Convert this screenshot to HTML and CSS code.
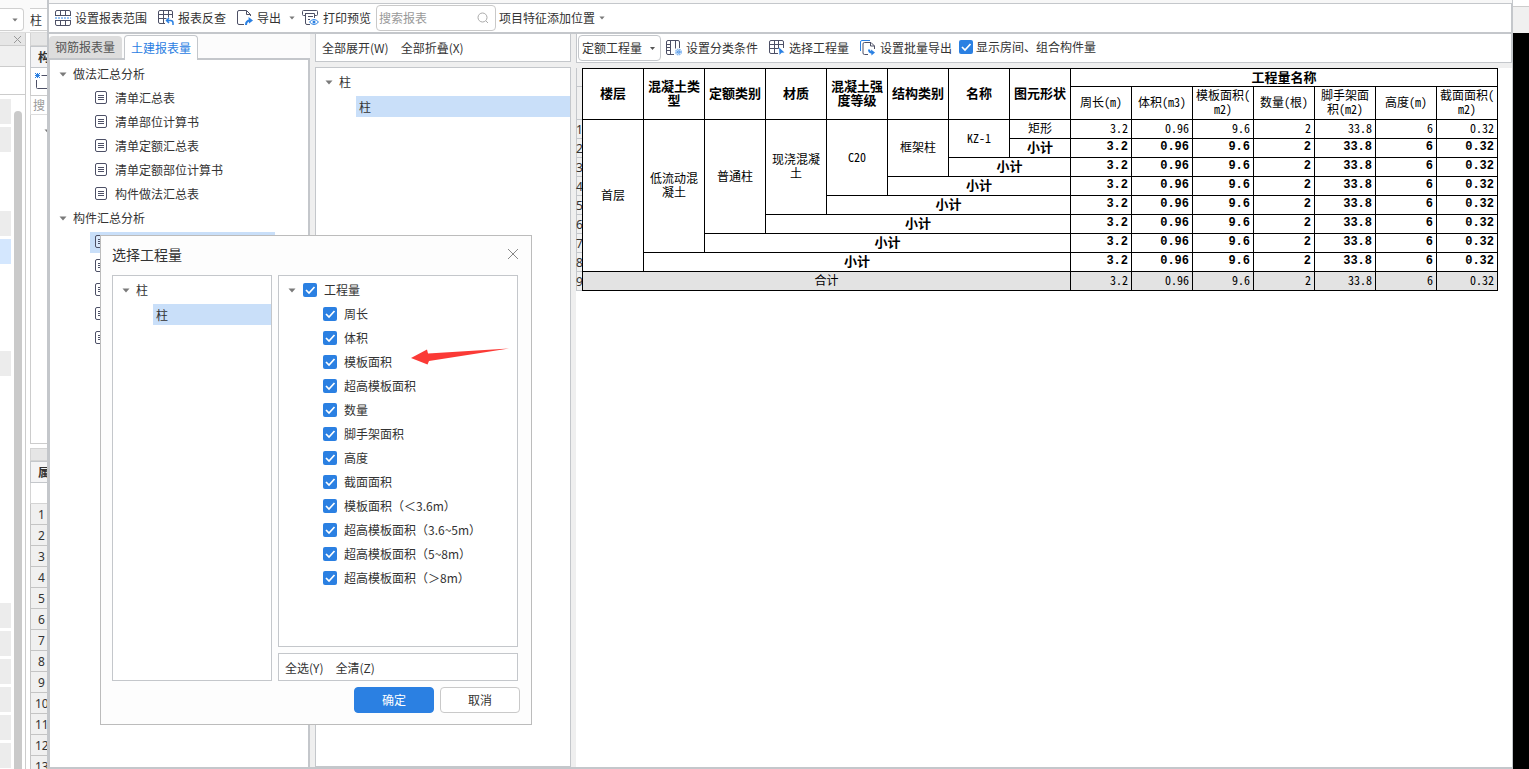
FILE: index.html
```html
<!DOCTYPE html>
<html lang="zh-CN">
<head>
<meta charset="utf-8">
<title>报表</title>
<link rel="stylesheet" href="styles.css">
</head>
<body>
<svg class="defs" width="0" height="0" aria-hidden="true">
  <defs>
    <symbol id="doc" viewBox="0 0 12 13"><rect x=".5" y=".5" width="11" height="12" rx="1.5" fill="#fff" fill-opacity=".3" stroke="#4d5066"/><path d="M3 4.5h6M3 6.5h6M3 8.5h6" stroke="#4d5066"/></symbol>
    <symbol id="caret" viewBox="0 0 8 5"><path d="M.5 .5h7L4 4.5z" fill="#7a7a7a"/></symbol>
  </defs>
</svg>
<div class="desktop">
  <aside class="back-nav">
    <div class="back-top"><span class="back-combo"><svg width="6" height="4"><use href="#caret"/></svg></span></div>
    <div class="back-title"><svg width="9" height="9" viewBox="0 0 9 9"><path d="M1 1l7 7M8 1l-7 7" stroke="#999"/></svg></div>
    <div class="back-band"></div>
    <div class="back-gap"></div>
    <div class="back-list">
      <div class="blocks">
        <i class="on"></i><i class="on"></i><i></i><i></i><i class="on"></i><i class="sel"></i><i></i><i></i><i></i><i class="on"></i><i></i><i></i>
        <i></i><i></i><i></i><i></i><i></i><i></i><i class="on"></i><i class="on"></i><i class="on"></i><i class="on"></i><i class="on"></i><i class="on"></i>
      </div>
      <div class="scroll"></div>
    </div>
  </aside>
  <aside class="back-props">
    <div class="back-top"><span class="back-combo second">柱</span></div>
    <div class="strip"></div>
    <div class="back-tab">构</div>
    <div class="back-new"><svg width="18" height="18" viewBox="0 0 18 18"><path d="M6.500 2.500H16M1.500 7v7.500q0 1 1 1H16" fill="none" stroke="#4d5066"/><path d="M0 0l5 5M5 0L0 5M2.500 0v5M0 2.500h5" stroke="#2b80e2"/></svg></div>
    <div class="back-search">搜</div>
    <div class="back-tree"><svg width="8" height="5"><use href="#caret"/></svg></div>
    <div class="strip lower"></div>
    <div class="back-tab">属</div>
    <div class="back-head"></div>
    <ol class="back-rows"><li>1</li><li>2</li><li>3</li><li>4</li><li>5</li><li>6</li><li>7</li><li>8</li><li>9</li><li>10</li><li>11</li><li>12</li><li>13</li></ol>
  </aside>

  <main class="window">
    <div class="toolbar">
      <button class="tool"><svg width="16" height="16" viewBox="0 0 16 16" fill="none" stroke="#4d5066"><path d="M.5 6V2Q.5 .5 2 .5h12q1.500 0 1.500 1.500v4M.5 10v4q0 1.500 1.500 1.500h12q1.500 0 1.500-1.500v-4M5.500 .5V5M10.500 .5V5M5.500 11v4.500M10.500 11v4.500M.5 5.500h15M.5 10.500h15"/><path d="M0 8h16" stroke="#2b80e2" stroke-dasharray="2 1"/></svg>设置报表范围</button>
      <button class="tool"><svg width="16" height="16" viewBox="0 0 16 16" fill="none" stroke="#4d5066"><path d="M7 13.500H2Q.5 13.500 .5 12V2Q.5 .5 2 .5h11q1.500 0 1.500 1.500v6M.5 4.500h14M.5 8.500h8M5.500 .5v13M10.500 .5v7"/><path d="M8.500 10.500h4q2.500 0 2.500 2.500v2M11 8l-2.500 2.500L11 13" stroke="#2b80e2" stroke-width="1.500"/></svg>报表反查</button>
      <button class="tool"><svg width="16" height="16" viewBox="0 0 16 16" fill="none" stroke="#4d5066"><path d="M7 14.500H2Q.5 14.500 .5 13V2Q.5 .5 2 .5h7.500l4 4V6M9.500 .5v4h4"/><path d="M9 15q0-4.500 4-4.500" stroke="#2b80e2" stroke-width="2"/><path d="M11.500 7l4.500 3.500-4 3z" fill="#2b80e2" stroke="none"/></svg>导出<svg class="drop" width="6" height="4"><use href="#caret"/></svg></button>
      <button class="tool"><svg width="17" height="16" viewBox="0 0 17 16" fill="none" stroke="#4d5066"><path d="M3.500 5.500H1.500q-1 0-1-1v-3q0-1 1-1h13q1 0 1 1v3q0 1-1 1h-2M3.500 3v10q0 1.500 1.500 1.500h3M3.500 3.500h9V8M6 6.500h5M6 9.500h2"/><path d="M7.500 12q4.500-5 9 0-4.500 5-9 0z" stroke="#2b80e2" fill="#fff"/><circle cx="12" cy="12" r="1.500" fill="#2b80e2" stroke="none"/></svg>打印预览</button>
      <label class="search"><input type="text" placeholder="搜索报表" aria-label="搜索报表"><svg width="12" height="12" viewBox="0 0 12 12" fill="none" stroke="#aaa"><circle cx="5.500" cy="5.500" r="4.500"/><path d="M9 9l2 2"/></svg></label>
      <button class="tool place">项目特征添加位置<svg class="drop near" width="6" height="4"><use href="#caret"/></svg></button>
    </div>

    <div class="panes">
      <section class="reports">
        <div class="tabs"><button class="tab">钢筋报表量</button><button class="tab active">土建报表量</button></div>
        <div class="tree report-tree">
          <div class="node"><svg width="8" height="5"><use href="#caret"/></svg>做法汇总分析</div>
          <div class="leaf"><svg width="12" height="13"><use href="#doc"/></svg>清单汇总表</div>
          <div class="leaf"><svg width="12" height="13"><use href="#doc"/></svg>清单部位计算书</div>
          <div class="leaf"><svg width="12" height="13"><use href="#doc"/></svg>清单定额汇总表</div>
          <div class="leaf"><svg width="12" height="13"><use href="#doc"/></svg>清单定额部位计算书</div>
          <div class="leaf"><svg width="12" height="13"><use href="#doc"/></svg>构件做法汇总表</div>
          <div class="node"><svg width="8" height="5"><use href="#caret"/></svg>构件汇总分析</div>
          <div class="leaf picked"><svg width="12" height="13"><use href="#doc"/></svg></div>
          <div class="leaf"><svg width="12" height="13"><use href="#doc"/></svg></div>
          <div class="leaf"><svg width="12" height="13"><use href="#doc"/></svg></div>
          <div class="leaf"><svg width="12" height="13"><use href="#doc"/></svg></div>
          <div class="leaf"><svg width="12" height="13"><use href="#doc"/></svg></div>
        </div>
      </section>

      <section class="members">
        <div class="links"><button class="text-btn">全部展开(W)</button><button class="text-btn">全部折叠(X)</button></div>
        <div class="tree member-tree">
          <div class="node"><svg width="8" height="5"><use href="#caret"/></svg>柱</div>
          <div class="chosen">柱</div>
        </div>
      </section>

      <section class="result">
        <div class="result-bar">
          <select class="kind" aria-label="工程量类型"><option>定额工程量</option></select>
          <button class="tool"><svg width="16" height="16" viewBox="0 0 16 16" fill="none" stroke="#4d5066"><path d="M8 14.500H2Q.5 14.500 .5 13V2Q.5 .5 2 .5h10q1.500 0 1.500 1.500v6M4.500 .5v14M9.500 .5v8M.5 4.500h4M.5 7.500h4M.5 10.500h4"/><circle cx="12.500" cy="12" r="2.500" stroke="#8dbcf2" stroke-width="2" stroke-dasharray="1.500 .5"/><circle cx="12.500" cy="12" r="1" stroke="#2b80e2"/></svg>设置分类条件</button>
          <button class="tool"><svg width="16" height="16" viewBox="0 0 16 16" fill="none" stroke="#4d5066"><path d="M9 13.500H2Q.5 13.500 .5 12V2Q.5 .5 2 .5h11q1.500 0 1.500 1.500v6M.5 4.500h14M.5 8.500h9M5.500 .5v13M9.500 .5v8"/><path d="M10 7.500l5.500 5-3 .3L10.500 15z" fill="#2b80e2" stroke="none"/></svg>选择工程量</button>
          <button class="tool"><svg width="16" height="16" viewBox="0 0 16 16" fill="none" stroke="#4d5066"><path d="M.5 11V2Q.5 .5 2 .5h8" stroke="#2b80e2"/><path d="M8 14.500H4.500q-1.500 0-1.500-1.500V4q0-1.500 1.500-1.500H11L14.500 6v3M10.500 2.500V6h4"/><path d="M9 9.500q0 3 3 3" stroke="#2b80e2" stroke-width="2"/><path d="M11 9.500l4 3-3.500 3z" fill="#2b80e2" stroke="none"/></svg>设置批量导出</button>
          <label class="check"><input type="checkbox" checked>显示房间、组合构件量</label>
        </div>
        <div class="sheet">
          <div class="row-nums"><span class="h1"></span><span class="h2"></span><span>1</span><span>2</span><span>3</span><span>4</span><span>5</span><span>6</span><span>7</span><span>8</span><span>9</span></div>
          <table class="grid">
            <thead>
              <tr class="top"><th rowspan="2">楼层</th><th rowspan="2">混凝土类型</th><th rowspan="2">定额类别</th><th rowspan="2">材质</th><th rowspan="2">混凝土强度等级</th><th rowspan="2">结构类别</th><th rowspan="2">名称</th><th rowspan="2">图元形状</th><th colspan="7">工程量名称</th></tr>
              <tr class="units"><th>周长(m)</th><th>体积(m3)</th><th>模板面积(<br>m2)</th><th>数量(根)</th><th>脚手架面<br>积(m2)</th><th>高度(m)</th><th>截面面积(<br>m2)</th></tr>
            </thead>
            <tbody>
              <tr class="plain"><td rowspan="8">首层</td><td rowspan="7">低流动混凝土</td><td rowspan="6">普通柱</td><td rowspan="5">现浇混凝土</td><td rowspan="4">C20</td><td rowspan="3">框架柱</td><td rowspan="2">KZ-1</td><td>矩形</td><td class="n">3.2</td><td class="n">0.96</td><td class="n">9.6</td><td class="n">2</td><td class="n">33.8</td><td class="n">6</td><td class="n">0.32</td></tr>
              <tr class="sub"><td>小计</td><td class="n">3.2</td><td class="n">0.96</td><td class="n">9.6</td><td class="n">2</td><td class="n">33.8</td><td class="n">6</td><td class="n">0.32</td></tr>
              <tr class="sub"><td colspan="2">小计</td><td class="n">3.2</td><td class="n">0.96</td><td class="n">9.6</td><td class="n">2</td><td class="n">33.8</td><td class="n">6</td><td class="n">0.32</td></tr>
              <tr class="sub"><td colspan="3">小计</td><td class="n">3.2</td><td class="n">0.96</td><td class="n">9.6</td><td class="n">2</td><td class="n">33.8</td><td class="n">6</td><td class="n">0.32</td></tr>
              <tr class="sub"><td colspan="4">小计</td><td class="n">3.2</td><td class="n">0.96</td><td class="n">9.6</td><td class="n">2</td><td class="n">33.8</td><td class="n">6</td><td class="n">0.32</td></tr>
              <tr class="sub"><td colspan="5">小计</td><td class="n">3.2</td><td class="n">0.96</td><td class="n">9.6</td><td class="n">2</td><td class="n">33.8</td><td class="n">6</td><td class="n">0.32</td></tr>
              <tr class="sub"><td colspan="6">小计</td><td class="n">3.2</td><td class="n">0.96</td><td class="n">9.6</td><td class="n">2</td><td class="n">33.8</td><td class="n">6</td><td class="n">0.32</td></tr>
              <tr class="sub"><td colspan="7">小计</td><td class="n">3.2</td><td class="n">0.96</td><td class="n">9.6</td><td class="n">2</td><td class="n">33.8</td><td class="n">6</td><td class="n">0.32</td></tr>
              <tr class="total"><td colspan="8">合计</td><td class="n">3.2</td><td class="n">0.96</td><td class="n">9.6</td><td class="n">2</td><td class="n">33.8</td><td class="n">6</td><td class="n">0.32</td></tr>
            </tbody>
          </table>
        </div>
      </section>
    </div>
  </main>
  <aside class="back-right"></aside>
</div>

<div class="dialog" role="dialog" aria-labelledby="dialog-title">
  <header class="dialog-head"><span id="dialog-title">选择工程量</span><button class="close" aria-label="关闭"><svg width="12" height="12" viewBox="0 0 12 12"><path d="M1 1l10 10M11 1L1 11" stroke="#888"/></svg></button></header>
  <div class="dialog-body">
    <div class="box pick-tree">
      <div class="node"><svg width="8" height="5"><use href="#caret"/></svg>柱</div>
      <div class="chosen">柱</div>
    </div>
    <div class="dialog-side">
      <div class="box quantities">
        <div class="node"><svg width="8" height="5"><use href="#caret"/></svg><label class="check"><input type="checkbox" checked>工程量</label></div>
        <label class="check item"><input type="checkbox" checked>周长</label>
        <label class="check item"><input type="checkbox" checked>体积</label>
        <label class="check item"><input type="checkbox" checked>模板面积</label>
        <label class="check item"><input type="checkbox" checked>超高模板面积</label>
        <label class="check item"><input type="checkbox" checked>数量</label>
        <label class="check item"><input type="checkbox" checked>脚手架面积</label>
        <label class="check item"><input type="checkbox" checked>高度</label>
        <label class="check item"><input type="checkbox" checked>截面面积</label>
        <label class="check item"><input type="checkbox" checked>模板面积（＜3.6m）</label>
        <label class="check item"><input type="checkbox" checked>超高模板面积（3.6~5m）</label>
        <label class="check item"><input type="checkbox" checked>超高模板面积（5~8m）</label>
        <label class="check item"><input type="checkbox" checked>超高模板面积（＞8m）</label>
      </div>
      <div class="box picks"><button class="text-btn">全选(Y)</button><button class="text-btn">全清(Z)</button></div>
    </div>
  </div>
  <footer class="dialog-foot"><button class="btn primary">确定</button><button class="btn">取消</button></footer>
  <svg class="pointer" width="100" height="18" viewBox="0 0 100 18" aria-hidden="true"><path d="M0 10L16 1.500 17 5.500 98 .5 18 13 16.500 16.500z" fill="#fb3a36"/></svg>
</div>
</body>
</html>
```
FILE: styles.css
```css
* { box-sizing: border-box; }
body {
  margin: 0;
  height: 100vh;
  overflow: hidden;
  background: #fff;
  color: #333;
  font: 12px/18px "Noto Sans CJK SC", sans-serif;
}
button, input, select { font: inherit; color: inherit; }
button { background: none; border: 0; padding: 0; white-space: nowrap; }
svg { flex: none; }
.defs { position: absolute; }
.desktop { display: flex; height: 100vh; }

/* application behind the report window */
.back-nav, .back-props { display: flex; flex-direction: column; flex: none; overflow: hidden; }
.back-nav { width: 30px; }
.back-props { width: 17px; }
.back-top { flex: none; height: 33px; padding-top: 8px; border-bottom: 1px solid #ddd; background: #fafafa; }
.back-combo { display: flex; align-items: center; justify-content: flex-end; width: 24px; height: 23px; padding-right: 5px; border: 1px solid #d0d0d0; border-left: 0; border-radius: 0 4px 4px 0; background: #fff; }
.back-combo.second { width: auto; justify-content: flex-start; padding: 0; border-right: 0; border-radius: 0; }
.back-title { display: flex; align-items: center; justify-content: flex-end; flex: none; width: 26px; height: 12px; padding-right: 3px; background: #e6e6e6; border-right: 1px solid #ccc; }
.back-band { flex: none; width: 26px; height: 22px; background: #f0f0f0; border: 1px solid #ccc; border-left: 0; }
.back-gap { flex: none; width: 26px; height: 28px; border: 1px solid #ccc; border-top: 0; border-left: 0; }
.back-list { display: flex; flex: 1; min-height: 0; width: 26px; border-right: 1px solid #ccc; padding-top: 4px; }
.blocks { display: flex; flex-direction: column; gap: 3px; width: 11px; margin-right: 3px; }
.blocks i { flex: none; height: 25px; }
.blocks .on { background: #ececec; }
.blocks .sel { background: #d4e7fe; }
.scroll { width: 8px; margin-top: 12px; background: #cacaca; border-radius: 4px 4px 0 0; }
.strip { flex: none; height: 13px; background: #e6e6e6; border: 1px solid #d4d4d4; border-right: 0; border-top: 0; }
.strip.lower { margin-top: 4px; border-top: 1px solid #d4d4d4; }
.back-tab { flex: none; height: 22px; padding: 1px 0 0 7px; background: #f4f4f5; border: 1px solid #c4c7cb; border-right: 0; font-weight: 700; white-space: nowrap; }
.back-new { flex: none; height: 28px; padding: 5px 0 0 4px; border: 1px solid #ccc; border-top: 0; border-right: 0; }
.back-search { flex: none; height: 19px; padding-left: 2px; color: #999; border: 1px solid #ddd; border-top: 0; border-right: 0; white-space: nowrap; }
.back-tree { flex: none; height: 329px; padding: 5px 0 0 13px; border: 1px solid #ccc; border-top: 0; border-right: 0; }
.back-head { flex: none; height: 21px; border: 1px solid #d4d4d4; border-top: 0; border-right: 0; }
.back-rows { margin: 0; padding: 0; list-style: none; }
.back-rows li { height: 21px; line-height: 22px; background: #f0f0f0; border: 1px solid #c4c4c4; border-top: 0; border-right: 0; font-family: "Noto Sans", sans-serif; text-indent: 7px; white-space: nowrap; }
.back-rows li:nth-child(n+10) { text-indent: 4px; }
.back-right { flex: none; width: 16px; background: linear-gradient(#fff 6px, #ccc 6px 7px, #f0f0f0 7px 33px, #000 33px); }

/* report window */
.window { display: flex; flex-direction: column; flex: 1; min-width: 0; padding-top: 3px; border: solid #c4c7cb; border-width: 0 1px 0 2px; background: #f7f7f7; }
.toolbar { display: flex; align-items: center; flex: none; height: 31px; padding: 0 6px; background: #fff; border: solid #c4c7cb; border-width: 1px 1px 2px 0; }
.tool { display: flex; align-items: center; gap: 4px; margin-right: 11px; }
.drop { margin-left: 4px; }
.drop.near { margin-left: 0; }
.toolbar .tool:nth-child(3) { margin-right: 7px; }
.toolbar .tool:nth-child(4) { margin-right: 5px; }
.search { display: flex; align-items: center; width: 120px; height: 26px; padding: 0 6px 0 2px; margin-right: 3px; border: 1px solid #c9c9c9; border-radius: 4px; }
.search input { flex: 1; min-width: 0; border: 0; padding: 0; outline: 0; background: none; }
.search input::placeholder { color: #999; }
.panes { display: flex; flex: 1; min-height: 0; background: #efefef; border-bottom: 2px solid #c4c7cb; }

.reports { display: flex; flex-direction: column; flex: none; width: 261px; margin-right: 5px; }
.tabs { position: relative; display: flex; align-items: flex-end; gap: 2px; flex: none; height: 24px; background: #fcfcfc; }
.tab { height: 22px; padding: 0 7px 0 6px; background: #ddd; border-radius: 4px 4px 0 0; color: #555; }
.tab.active { height: 25px; padding: 0 6px; margin-bottom: -2px; background: #fff; border: 1px solid #c4c7cb; border-bottom: 0; color: #2b80e2; }
.tree { background: #fff; }
.report-tree { flex: 1; padding-top: 2px; border: solid #c4c7cb; border-width: 2px 2px 0 1px; }
.node, .leaf { display: flex; align-items: center; height: 24px; }
.node { gap: 6px; padding-left: 9px; }
.leaf { gap: 8px; padding-left: 5px; margin-left: 40px; }
.leaf svg { margin-bottom: 2px; }
.leaf.picked { width: 185px; height: 21px; margin-top: 2px; margin-bottom: 1px; background: #c9dff9; }
.chosen { height: 21px; padding-left: 3px; margin: 2px 0 0 40px; line-height: 21px; background: #c9dff9; }

.members { display: flex; flex-direction: column; flex: none; width: 256px; margin-right: 5px; }
.links { display: flex; align-items: center; gap: 12px; flex: none; height: 28px; padding-left: 6px; margin-bottom: 5px; background: #fff; border: 1px solid #c4c7cb; border-top: 0; }
.member-tree { flex: 1; padding-top: 2px; border: 1px solid #c4c7cb; }

.result { display: flex; flex-direction: column; flex: 1; min-width: 0; }
.result-bar { display: flex; align-items: center; flex: none; height: 29px; padding: 0 1px; background: #fff; border: solid #c4c7cb; border-width: 0 1px 1px; }
.kind { appearance: none; width: 83px; height: 26px; padding: 0 3px; margin-right: 5px; border: 1px solid #c4c7cb; border-radius: 4px; background: #fff url("data:image/svg+xml,%3Csvg xmlns='http://www.w3.org/2000/svg' width='5' height='3'%3E%3Cpath d='M0 0h5L2.500 3z' fill='%23555'/%3E%3C/svg%3E") no-repeat right 5px center; }
.result-bar .tool:nth-child(4) { margin-right: 7px; }
.check { display: flex; align-items: center; gap: 3px; }
.check input { appearance: none; flex: none; width: 14px; height: 14px; margin: 0; border-radius: 2px; background: #ccc; }
.check input:checked { background: #2b80e2 url("data:image/svg+xml,%3Csvg xmlns='http://www.w3.org/2000/svg' width='14' height='14'%3E%3Cpath d='M3 7l3 3 5.500-6' fill='none' stroke='%23fff' stroke-width='1.700'/%3E%3C/svg%3E"); }
.result-bar .check { margin-bottom: 2px; }

.sheet { display: flex; align-items: flex-start; flex: 1; min-height: 0; margin-top: 5px; background: #fff; }
.row-nums { display: flex; flex-direction: column; flex: none; width: 6px; padding-top: 1px; background: #f0f0f0; border-left: 1px solid #c4c7cb; }
.row-nums span { height: 19px; line-height: 20px; border-bottom: 1px solid #c4c7cb; font-family: "Noto Sans", sans-serif; text-indent: -1px; }
.row-nums .h1 { height: 18px; }
.row-nums .h2 { height: 33px; }
.grid { table-layout: fixed; width: 916px; border-spacing: 0; border: solid #000; border-width: 1px 0 0 1px; color: #000; line-height: 14px; font-feature-settings: "hwid"; }
.grid th, .grid td { height: 19px; padding: 0 2px 2px; border: solid #000; border-width: 0 1px 1px 0; text-align: center; }
.grid th { font-size: 13px; }
.grid .top th { height: 18px; }
.grid .units th { height: 33px; font-size: 12px; font-weight: 400; }
.grid .sub td { font-size: 13px; font-weight: 700; }
.grid .n, .grid .sub .n { padding-right: 3px; text-align: right; }
.grid .sub .n { font: 700 12px/14px "Liberation Mono", monospace; }
.grid .total td { background: #e3e3e3; }

/* quantity picker */
.dialog { position: absolute; left: 100px; top: 235px; width: 432px; height: 490px; display: flex; flex-direction: column; padding: 0 11px 11px; background: #fdfdfd; border: 1px solid #bcbcbc; }
.dialog-head { display: flex; align-items: center; justify-content: space-between; flex: none; height: 39px; padding: 0 1px 4px 0; font-size: 14px; }
.close { display: flex; }
.dialog-body { display: flex; gap: 6px; flex: 1; min-height: 0; margin-right: 2px; }
.box { background: #fff; border: 1px solid #c4c7cb; }
.pick-tree { width: 160px; padding-top: 2px; }
.dialog-side { display: flex; flex-direction: column; gap: 6px; flex: 1; }
.quantities { flex: 1; padding-top: 2px; }
.quantities .node { gap: 7px; }
.quantities .check { gap: 7px; }
.item { height: 24px; padding-left: 44px; }
.picks { display: flex; align-items: center; gap: 12px; height: 28px; padding: 2px 6px 0; }
.dialog-foot { display: flex; justify-content: flex-end; gap: 6px; flex: none; padding-top: 6px; }
.btn { width: 80px; height: 26px; border: 1px solid #c9c9c9; border-radius: 4px; background: #fff; }
.btn.primary { background: #2b80e2; border-color: #2b80e2; color: #fff; }
.pointer { position: absolute; left: 310px; top: 112px; }
```
